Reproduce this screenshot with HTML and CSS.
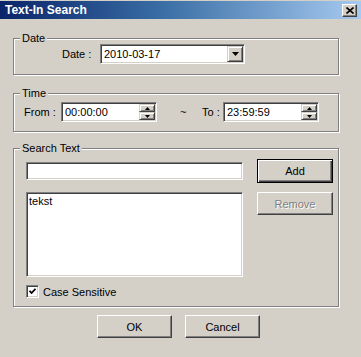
FILE: index.html
```html
<!DOCTYPE html>
<html>
<head>
    <title>Text-In Search</title>
    <link rel="stylesheet" href="styles.css">
</head>
<body>

<div class="dialog">
    <!-- Title bar -->
    <div class="titlebar">
        <span class="title">Text-In Search</span>
        <button type="button" class="close">
            <svg width="8" height="7" viewBox="0 0 8 7"><path d="M0.5 0.5 L7.5 6.5 M7.5 0.5 L0.5 6.5" stroke="#000" stroke-width="1.6" fill="none"/></svg>
        </button>
    </div>

    <div class="content">
        <!-- Date -->
        <fieldset class="group group-date">
            <legend>Date</legend>
            <div class="group-body">
                <div class="row">
                    <label class="label label-date">Date :</label>
                    <div class="sunken combo">
                        <span class="field-value">2010-03-17</span>
                        <span class="raised drop-btn">
                            <svg width="7" height="4" viewBox="0 0 7 4"><path d="M0 0 H7 L3.5 4 Z" fill="#000"/></svg>
                        </span>
                    </div>
                </div>
            </div>
        </fieldset>

        <!-- Time -->
        <fieldset class="group group-time">
            <legend>Time</legend>
            <div class="group-body">
                <div class="row">
                    <label class="label label-from">From :</label>
                    <div class="sunken spin">
                        <span class="field-value">00:00:00</span>
                        <span class="spin-btns">
                            <span class="raised spin-btn"><svg width="5" height="3" viewBox="0 0 5 3"><path d="M2.5 0 L5 3 H0 Z" fill="#000"/></svg></span>
                            <span class="raised spin-btn"><svg width="5" height="3" viewBox="0 0 5 3"><path d="M0 0 H5 L2.5 3 Z" fill="#000"/></svg></span>
                        </span>
                    </div>
                    <span class="tilde">~</span>
                    <label class="label label-to">To :</label>
                    <div class="sunken spin">
                        <span class="field-value">23:59:59</span>
                        <span class="spin-btns">
                            <span class="raised spin-btn"><svg width="5" height="3" viewBox="0 0 5 3"><path d="M2.5 0 L5 3 H0 Z" fill="#000"/></svg></span>
                            <span class="raised spin-btn"><svg width="5" height="3" viewBox="0 0 5 3"><path d="M0 0 H5 L2.5 3 Z" fill="#000"/></svg></span>
                        </span>
                    </div>
                </div>
            </div>
        </fieldset>

        <!-- Search text -->
        <fieldset class="group group-search">
            <legend>Search Text</legend>
            <div class="group-body">
                <div class="search-grid">
                    <div class="input-cell"><input type="text" class="sunken text-input"></div>
                    <button type="button" class="btn btn-default">Add</button>
                    <div class="sunken listbox">
                        <div class="list-item">tekst</div>
                    </div>
                    <button type="button" class="btn" disabled>Remove</button>
                </div>
                <label class="check-row">
                    <span class="checkbox">
                        <svg width="7" height="7" viewBox="0 0 7 7"><path d="M0.5 2.8 L2.6 5 L6.5 0.8" stroke="#000" stroke-width="1.8" fill="none"/></svg>
                    </span>
                    Case Sensitive
                </label>
            </div>
        </fieldset>

        <!-- Dialog buttons -->
        <div class="actions">
            <button type="button" class="btn btn-action">OK</button>
            <button type="button" class="btn btn-action">Cancel</button>
        </div>
    </div>
</div>

</body>
</html>
```

FILE: styles.css
```css
/* Classic dialog look */
* {
    box-sizing: border-box;
}
body {
    margin: 0;
    font-family: "Liberation Sans", Arial, sans-serif;
    font-size: 11px;
    color: #000;
}
.dialog {
    width: 361px;
    height: 357px;
    background: #d4d0c8;
    overflow: hidden;
    padding-top: 1px;
}
.titlebar {
    height: 18px;
    display: flex;
    align-items: center;
    justify-content: space-between;
    padding: 0 4px 0 5px;
    background: linear-gradient(to right, #0a246a, #3a6ea5 45%, #a6caf0);
}
.title {
    color: #fff;
    font-weight: bold;
    font-size: 12px;
}
.close {
    width: 15px;
    height: 13px;
    padding: 0;
    display: flex;
    align-items: center;
    justify-content: center;
    background: #d4d0c8;
    border: 1px solid;
    border-color: #fff #404040 #404040 #fff;
    box-shadow: inset -1px -1px #808080;
}

.content {
    padding: 13px 22px 0 13px;
}

/* Group boxes */
.group {
    margin: 0;
    padding: 0;
    min-width: 0;
    border: 1px solid #808080;
    box-shadow: inset 1px 1px #fff, 1px 1px #fff;
}
.group legend {
    margin-left: 6px;
    padding: 0 2px;
    line-height: 12px;
    background: #d4d0c8;
}
.group-date .group-body {
    padding: 0 0 10px 48px;
}
.group-time {
    margin-top: 12px;
}
.group-time .group-body {
    padding: 3px 0 9px 10px;
}
.group-search {
    margin-top: 10px;
}
.group-search .group-body {
    padding: 5px 5px 8px 12px;
}

.row {
    display: flex;
    align-items: center;
}
.label {
    flex: none;
}
.label-date {
    width: 38px;
}
.label-from {
    width: 37px;
}
.tilde {
    width: 22px;
    margin-left: 23px;
}
.label-to {
    width: 21px;
}

/* Sunken and raised edges */
.sunken {
    background: #fff;
    border: 1px solid;
    border-color: #808080 #fff #fff #808080;
    box-shadow: inset 1px 1px #404040, inset -1px -1px #d4d0c8;
}
.raised {
    background: #d4d0c8;
    border: 1px solid;
    border-color: #d4d0c8 #404040 #404040 #d4d0c8;
    box-shadow: inset 1px 1px #fff, inset -1px -1px #808080;
    display: flex;
    align-items: center;
    justify-content: center;
}

.combo {
    width: 145px;
    height: 20px;
    display: flex;
    align-items: center;
    padding: 1px;
}
.field-value {
    flex: 1;
    padding-left: 2px;
}
.drop-btn {
    width: 16px;
    height: 16px;
}
.spin {
    width: 96px;
    height: 20px;
    display: flex;
    align-items: center;
    padding: 1px;
}
.spin-btns {
    display: flex;
    flex-direction: column;
    width: 16px;
}
.spin-btn {
    height: 8px;
}

/* Search area */
.search-grid {
    display: grid;
    grid-template-columns: 217px 76px;
    column-gap: 14px;
    row-gap: 9px;
}
.input-cell {
    display: flex;
    align-items: center;
}
.text-input {
    width: 100%;
    height: 18px;
    padding: 0 2px;
    font: inherit;
    outline: none;
}
.listbox {
    height: 85px;
    padding: 2px;
}
.list-item {
    line-height: 13px;
}
.check-row {
    display: flex;
    align-items: center;
    gap: 4px;
    margin-top: 8px;
    height: 13px;
}
.checkbox {
    width: 13px;
    height: 13px;
    display: flex;
    align-items: center;
    justify-content: center;
    background: #fff;
    border: 1px solid;
    border-color: #808080 #fff #fff #808080;
    box-shadow: inset 1px 1px #404040, inset -1px -1px #d4d0c8;
}

/* Push buttons */
.btn {
    height: 23px;
    padding: 0;
    font: inherit;
    color: #000;
    background: #d4d0c8;
    border: 1px solid;
    border-color: #fff #404040 #404040 #fff;
    box-shadow: inset -1px -1px #808080;
}
.btn-default {
    height: 24px;
    border: 1px solid #000;
    box-shadow: inset 1px 1px #fff, inset -1px -1px #404040, inset -2px -2px #808080;
}
.btn:disabled {
    color: #808080;
    text-shadow: 1px 1px #fff;
}
.actions {
    display: flex;
    gap: 13px;
    margin-top: 8px;
    padding-left: 84px;
}
.btn-action {
    width: 75px;
}
```
